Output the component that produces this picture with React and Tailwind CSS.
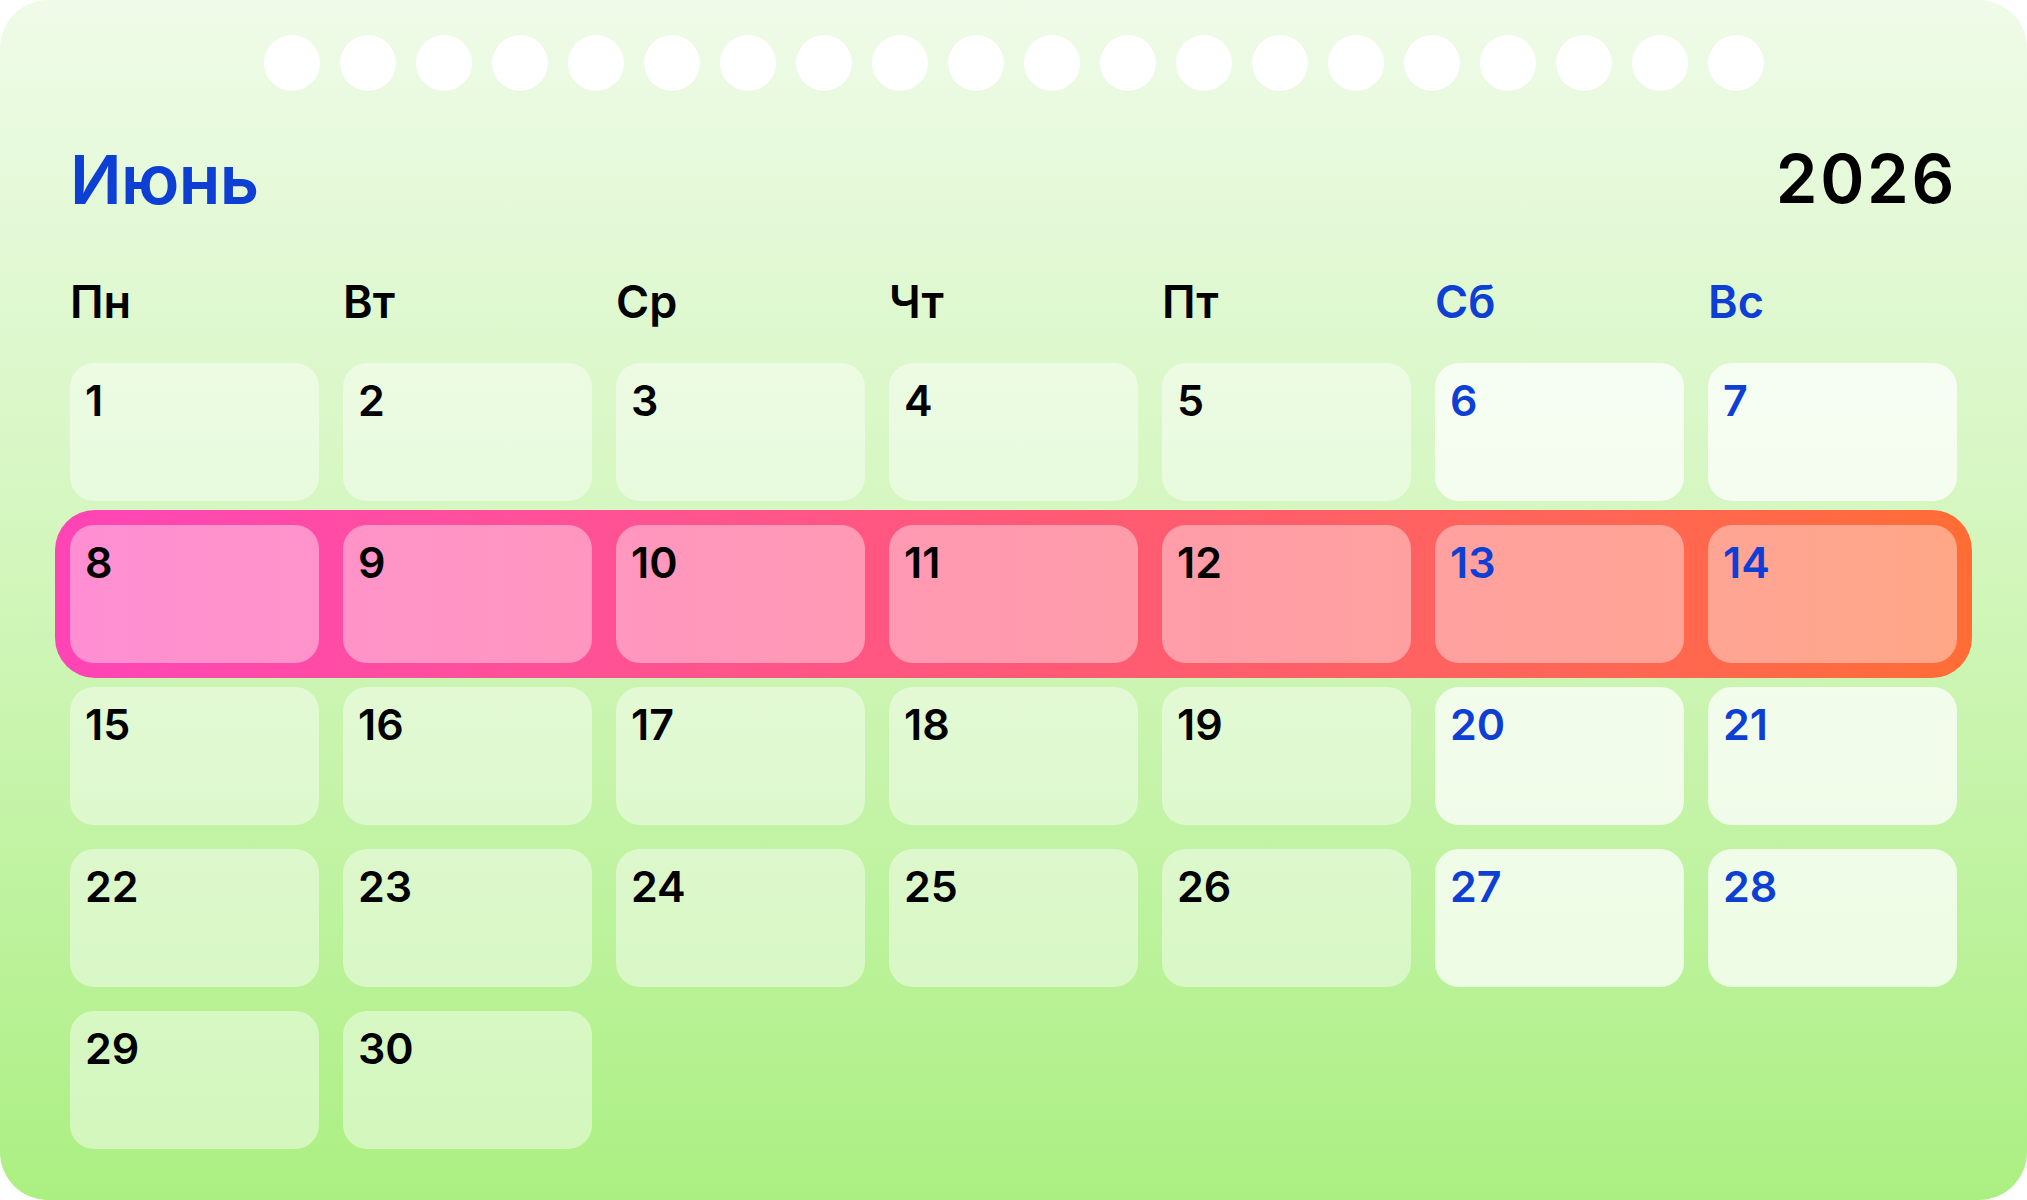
import React from "react";

const BLUE = "text-[#0e3fd5]";

const dayNames = ["Пн", "Вт", "Ср", "Чт", "Пт", "Сб", "Вс"];

const weeks = [
  [1, 2, 3, 4, 5, 6, 7],
  [8, 9, 10, 11, 12, 13, 14],
  [15, 16, 17, 18, 19, 20, 21],
  [22, 23, 24, 25, 26, 27, 28],
  [29, 30, null, null, null, null, null],
];

function Cell({ n, weekend, highlight }) {
  if (n === null) return <div className="h-[138px]" />;
  let bg = weekend ? "bg-white/75" : "bg-white/45";
  if (highlight) bg = "bg-white/40";
  return (
    <div className={`h-[138px] rounded-[24px] ${bg} pl-[15px] pt-[16px]`}>
      <span
        className={`block text-[43px] leading-none font-semibold ${weekend ? BLUE : "text-black"}`}
      >
        {n}
      </span>
    </div>
  );
}

function WeekRow({ week, highlight }) {
  return (
    <div className="grid grid-cols-7 gap-6">
      {week.map((n, i) => (
        <Cell key={i} n={n} weekend={i >= 5} highlight={highlight} />
      ))}
    </div>
  );
}

export default function App() {
  return (
    <div className="w-[2027px] h-[1200px] bg-white" style={{ fontFamily: "Inter, 'Noto Sans', sans-serif" }}>
      <div className="w-full h-full rounded-[48px] bg-linear-to-b from-[#effbe8] via-[#cdf5b4] via-55% to-[#abef81] px-[70px] pt-[35px] flex flex-col">
        <div className="flex justify-center gap-5">
          {Array.from({ length: 20 }).map((_, i) => (
            <div key={i} className="w-14 h-14 rounded-full bg-white" />
          ))}
        </div>

        <div className="mt-[54px] flex justify-between items-start">
          <div className={`text-[68px] leading-none font-semibold ${BLUE} tracking-[-0.01em]`}>Июнь</div>
          <div className="text-[67px] leading-none font-semibold text-black tracking-[0.04em]">2026</div>
        </div>

        <div className="mt-[66px] grid grid-cols-7 gap-6">
          {dayNames.map((d, i) => (
            <div
              key={d}
              className={`text-[45px] leading-none font-semibold ${i >= 5 ? BLUE : "text-black"}`}
            >
              {d}
            </div>
          ))}
        </div>

        <div className="mt-[39px] flex flex-col gap-6">
          {weeks.map((w, i) =>
            i === 1 ? (
              <div
                key={i}
                className="-m-[15px] p-[15px] rounded-[40px] bg-linear-to-r from-[#ff44b6] via-[#ff5878] to-[#ff6d35]"
              >
                <WeekRow week={w} highlight />
              </div>
            ) : (
              <WeekRow key={i} week={w} />
            )
          )}
        </div>
      </div>
    </div>
  );
}
